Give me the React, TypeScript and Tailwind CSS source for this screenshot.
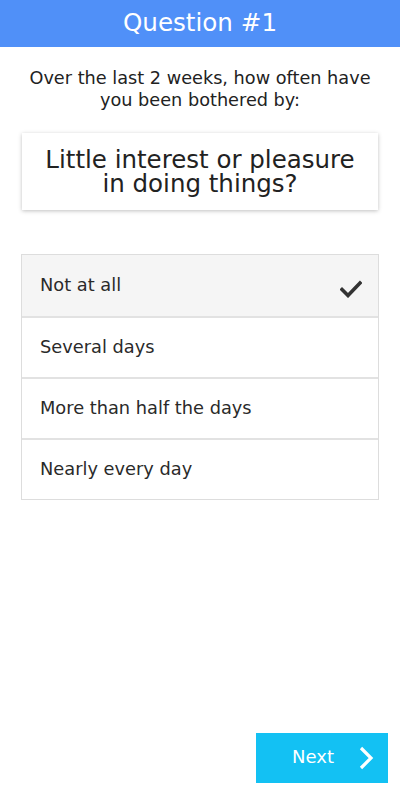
import React from "react";

const options = ["Not at all", "Several days", "More than half the days", "Nearly every day"];

export default function App() {
  return (
    <div
      className="h-[800px] w-[400px] flex flex-col bg-white text-[#222]"
      style={{ fontFamily: '"DejaVu Sans", sans-serif' }}
    >
      <div className="h-[47px] bg-[#5090f8] flex items-center justify-center text-white text-[24.6px] leading-none">
        Question #1
      </div>
      <p className="mt-[20px] text-center text-[17.7px] leading-[22px] px-2">
        Over the last 2 weeks, how often have
        <br />
        you been bothered by:
      </p>
      <div className="mx-[22px] mt-[22px] h-[77px] bg-white shadow-[0_1px_4px_rgba(0,0,0,0.25)] flex flex-col items-center justify-center text-center text-[24.5px] leading-[24px]">
        <span>Little interest or pleasure</span>
        <span>in doing things?</span>
      </div>
      <div className="mx-[21px] mt-[44px] border border-[#ddd] flex flex-col">
        {options.map((o, i) => (
          <div
            key={o}
            className={`h-[61px] flex items-center justify-between pl-[18px] pr-[16px] text-[17.8px] text-[#2a2a2a] ${
              i > 0 ? "border-t-2 border-[#e2e2e2]" : ""
            } ${i === 0 ? "bg-[#f5f5f5]" : "bg-white"}`}
          >
            <span>{o}</span>
            {i === 0 && (
              <svg width="22" height="18" viewBox="0 0 22 18" className="mt-[6px]">
                <path d="M2 9.5 L8 15.5 L20 3" fill="none" stroke="#333" strokeWidth="3.6" strokeLinecap="square" />
              </svg>
            )}
          </div>
        ))}
      </div>
      <div className="mt-auto mb-[17px] mr-[12px] self-end">
        <button className="w-[132px] h-[50px] bg-[#13c1f3] text-white text-[18px] flex items-center">
          <span className="ml-[36px] mb-[3px]">Next</span>
          <svg width="16" height="24" viewBox="0 0 16 24" className="ml-[24px]">
            <path d="M3 2 L13 12 L3 22" fill="none" stroke="white" strokeWidth="3.2" />
          </svg>
        </button>
      </div>
    </div>
  );
}
